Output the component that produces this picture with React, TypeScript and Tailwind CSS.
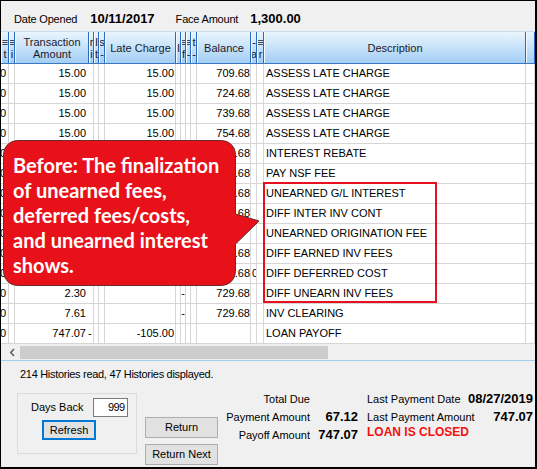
import React from "react";

type Row = {
  ta?: string;
  c4?: string;
  lc?: string;
  c9?: string;
  bal?: string;
  c13?: string;
  desc: string;
};

// rows 5-11 sit under the callout, only the tail of the balance shows
const rows: Row[] = [
  { ta: "15.00", lc: "15.00", bal: "709.68", desc: "ASSESS LATE CHARGE" },
  { ta: "15.00", lc: "15.00", bal: "724.68", desc: "ASSESS LATE CHARGE" },
  { ta: "15.00", lc: "15.00", bal: "739.68", desc: "ASSESS LATE CHARGE" },
  { ta: "15.00", lc: "15.00", bal: "754.68", desc: "ASSESS LATE CHARGE" },
  { bal: ".68", desc: "INTEREST REBATE" },
  { bal: ".68", desc: "PAY NSF FEE" },
  { bal: ".68", desc: "UNEARNED G/L INTEREST" },
  { bal: ".68", desc: "DIFF INTER INV CONT" },
  { desc: "UNEARNED ORIGINATION FEE" },
  { bal: ".68", desc: "DIFF EARNED INV FEES" },
  { bal: ".68", c13: "0", desc: "DIFF DEFERRED COST" },
  { ta: "2.30", c9: "-", bal: "729.68", desc: "DIFF UNEARN INV FEES" },
  { ta: "7.61", c9: "-", bal: "729.68", desc: "INV CLEARING" },
  { ta: "747.07", c4: "-", lc: "-105.00", desc: "LOAN PAYOFF" },
];

// leftover bits of the clipped narrow column headers
const head = [
  "≡\nt",
  "≡\ni",
  "Transaction\nAmount",
  "r\ni",
  "I\nt",
  "s\n-",
  "Late Charge",
  "I",
  "≡\nf",
  "≡\n-",
  "t\n-",
  "Balance",
  "-\na",
  "≡\nr",
  "Description",
  "",
];

const gridCols =
  "grid grid-cols-[8px_6px_74px_5px_5px_6px_71px_5px_5px_5px_6px_54px_6px_7px_262px_9px]";

const Cell = ({
  children,
  align = "left",
  className = "",
}: {
  children?: React.ReactNode;
  align?: "left" | "right" | "center";
  className?: string;
}) => {
  const j =
    align === "right"
      ? "justify-end"
      : align === "center"
      ? "justify-center"
      : "justify-start";
  return (
    <div
      className={`h-[20px] border-r border-b border-[#d6d6d6] bg-white overflow-hidden whitespace-nowrap flex items-center ${j} ${className}`}
    >
      {children}
    </div>
  );
};

const GridRow = ({ r }: { r: Row }) => (
  <>
    <Cell align="right" className="pr-[2px]">
      0
    </Cell>
    <Cell />
    <Cell align="right" className="pr-[2px]">
      {r.ta}
    </Cell>
    <Cell className="-ml-[1px]">{r.c4}</Cell>
    <Cell />
    <Cell />
    <Cell align="right" className="pr-[1px]">
      {r.lc}
    </Cell>
    <Cell />
    <Cell align="center">{r.c9}</Cell>
    <Cell />
    <Cell />
    <Cell align="right">{r.bal}</Cell>
    <Cell className="pl-[1px]">{r.c13}</Cell>
    <Cell />
    <Cell className="pl-[2px]">{r.desc}</Cell>
    <Cell />
  </>
);

const Btn = ({
  children,
  className = "",
}: {
  children: React.ReactNode;
  className?: string;
}) => (
  <div
    className={`flex items-center justify-center bg-[#e1e1e1] border border-[#adadad] text-[11px] ${className}`}
  >
    {children}
  </div>
);

export default function App() {
  return (
    <div
      className="relative w-[537px] h-[469px] overflow-hidden bg-[#f0f0f0] border-t border-l border-r-2 border-b-2 border-black text-black"
      style={{ fontFamily: '"Liberation Sans", Arial, sans-serif' }}
    >
      {/* top info */}
      <div className="h-[30px] flex items-center pt-[6px] pl-[13px] text-[11px]">
        <span className="tracking-[-0.2px]">Date Opened</span>
        <span className="ml-[13px] text-[13px] font-bold">10/11/2017</span>
        <span className="ml-[21px] tracking-[-0.2px]">Face Amount</span>
        <span className="ml-[12px] text-[13px] font-bold">1,300.00</span>
      </div>

      {/* grid */}
      <div className="border-t border-[#c9dcee] text-[11px]">
        <div className={`${gridCols} h-[32px] border-b border-[#3a78c2]`}>
          {head.map((h, i) => (
            <div
              key={i}
              className="h-full overflow-hidden border-r border-[#2a6bbf] border-l border-l-[#f4faff] bg-linear-to-b from-[#eaf5fd] to-[#a2cef4] flex items-center justify-center text-center whitespace-pre leading-[12px] text-[#1a1a2a]"
            >
              {h}
            </div>
          ))}
        </div>
        <div className={gridCols}>
          {rows.map((r, i) => (
            <GridRow key={i} r={r} />
          ))}
        </div>
        {/* horizontal scrollbar */}
        <div className="h-[17px] flex items-center border-b border-[#9fd0ee]">
          <div className="w-[19px] h-full flex items-center justify-center pl-[3px]">
            <svg width="7" height="9" viewBox="0 0 7 9">
              <path d="M5 1 L1.8 4.5 L5 8" fill="none" stroke="#606060" strokeWidth="1.6" />
            </svg>
          </div>
          <div className="w-[308px] h-[13px] bg-[#cdcdcd]" />
        </div>
      </div>

      {/* bottom panel */}
      <div className="flex flex-col">
        <div className="ml-[19px] mt-[7px] text-[11px] leading-[13px] tracking-[-0.3px]">
          214 Histories read, 47 Histories displayed.
        </div>
        <div className="flex mt-[9px] items-start">
          <div className="ml-[16px] mt-[3px] w-[120px] h-[61px] border border-[#dcdcdc] flex flex-col">
            <div className="flex items-center mt-[4px] ml-[13px] text-[11px]">
              <span>Days Back</span>
              <div className="ml-[9px] w-[35px] h-[19px] bg-white border border-[#7a7a7a] flex items-center justify-end pr-[2px] tracking-[-0.6px]">
                999
              </div>
            </div>
            <div className="mt-[3px] ml-[24px] w-[54px] h-[20px] bg-[#e1e1e1] border-2 border-[#0078d7] flex items-center justify-center text-[11px]">
              Refresh
            </div>
          </div>

          <div className="ml-[8px] mt-[27px] flex flex-col gap-[6px]">
            <Btn className="w-[73px] h-[21px]">Return</Btn>
            <Btn className="w-[73px] h-[21px]">Return Next</Btn>
          </div>

          <div className="ml-[4px] grid grid-cols-[88px_57px_100px_66px] auto-rows-[18px] items-center text-[11px] whitespace-nowrap">
            <div className="text-right">Total Due</div>
            <div />
            <div>Last Payment Date</div>
            <div className="text-right text-[13px] font-bold">08/27/2019</div>

            <div className="text-right">Payment Amount</div>
            <div className="text-right pr-[9px] text-[13px] font-bold">67.12</div>
            <div>Last Payment Amount</div>
            <div className="text-right text-[13px] font-bold">747.07</div>

            <div className="text-right">Payoff Amount</div>
            <div className="text-right pr-[9px] text-[13px] font-bold">747.07</div>
            <div className="-mt-[6px] text-[12px] font-bold text-[#f21212]">LOAN IS CLOSED</div>
            <div />
          </div>
        </div>
      </div>

      {/* red highlight around the description rows */}
      <div className="absolute left-[262px] top-[181px] w-[174px] h-[121px] border-2 border-[#e8101e]" />

      {/* callout */}
      <div className="absolute left-[2px] top-[139px] w-[258px] h-[147px]">
        <svg width="258" height="147" viewBox="0 0 258 147" className="absolute inset-0">
          <path
            d="M14.5 0.5 H218.5 A14 14 0 0 1 232.5 14.5 V74 L256 81 L232.5 104 V131.5 A14 14 0 0 1 218.5 145.5 H14.5 A14 14 0 0 1 0.5 131.5 V14.5 A14 14 0 0 1 14.5 0.5 Z"
            fill="#e8111a"
            stroke="#6e2a2a"
            strokeWidth="1"
          />
        </svg>
        <div
          className="absolute left-[10px] top-[13px] text-white font-bold text-[20px] leading-[25px] whitespace-nowrap"
          style={{ fontFamily: "Lato, 'Open Sans', sans-serif" }}
        >
          Before: The finalization
          <br />
          of unearned fees,
          <br />
          deferred fees/costs,
          <br />
          and unearned interest
          <br />
          shows.
        </div>
      </div>
    </div>
  );
}
